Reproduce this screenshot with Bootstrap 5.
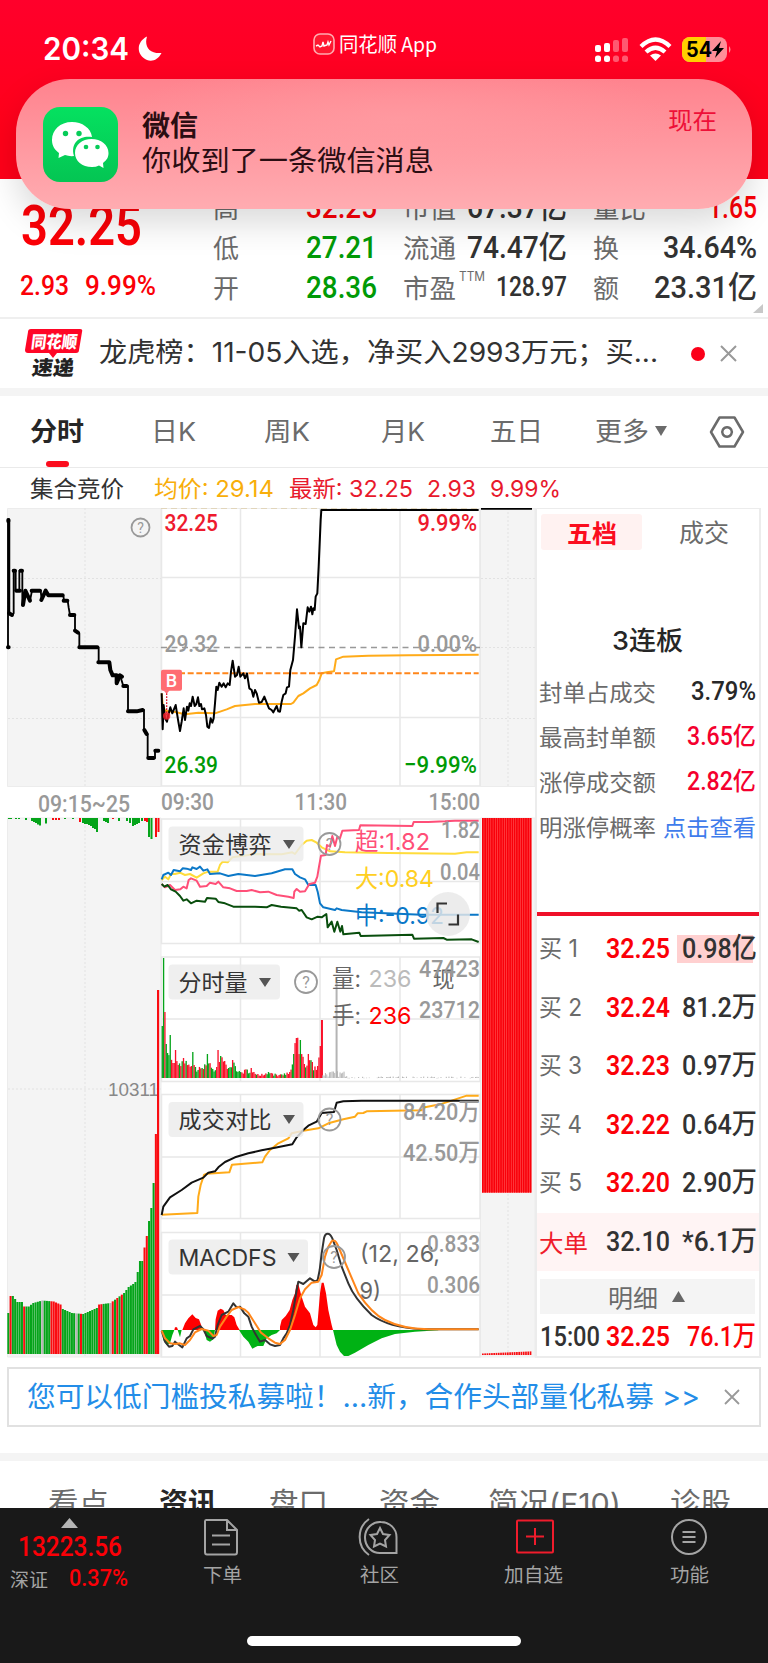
<!DOCTYPE html>
<html lang="zh-CN">
<head>
<meta charset="utf-8">
<meta name="viewport" content="width=device-width, initial-scale=1">
<title>同花顺</title>
<link rel="stylesheet" href="https://cdn.jsdelivr.net/npm/bootstrap@5.3.0/dist/css/bootstrap.min.css">
<style>
  body { font-family: "Noto Sans CJK SC", sans-serif; width: 768px; height: 1663px; overflow: hidden; background: #fff; color: #323232; line-height: 1; }
  svg { display: block; flex: none; }
  .num { font-family: Roboto, "Noto Sans CJK SC", sans-serif; font-weight: 500; }
  .ui { font-family: Inter, "Noto Sans CJK SC", sans-serif; }
  [data-w] { display: inline-block; white-space: nowrap; transform-origin: 0 50%; flex: none; text-align: left; }
  .up { color: #fb0007; } .down { color: #009a06; } .dim { color: #6b6b6b; }
  .app-top { height: 179px; background: linear-gradient(#ff002b, #ff0019 75%); color: #fff; padding: 0 36px 0 43px; }
  .status { height: 97px; }
  .clock { font-size: 31px; font-weight: 600; }
  .notice { left: 16px; top: 79px; width: 736px; height: 130px; border-radius: 54px; z-index: 5; padding: 0 35px 0 27px;
    background: radial-gradient(ellipse at 52% 30%, rgba(255,160,165,.55), transparent 50%), linear-gradient(#ff838e, #ffacb1); box-shadow: 0 14px 34px rgba(0,0,0,.15); color: #2b0d12; }
  .notice .title { font-size: 28px; font-weight: 600; line-height: 34px; }
  .notice .msg { font-size: 28px; line-height: 36px; }
  .notice .when { font-size: 24px; color: #ee1038; margin-top: 28px; }
  .quote { height: 138px; padding: 8px 10px 0 21px; }
  .quote .last-px { font-size: 55px; height: 75px; line-height: 79px; font-weight: 600; }
  .quote .chg { font-size: 28px; }
  .stats { width: 164px; margin-left: 26px; }
  .stats > div { height: 40px; font-size: 26px; }
  .stats .num { font-size: 31px; }
  .stats .small-num { font-size: 27px; }
  .rule { border-bottom: 2px solid #efefef; }
  .news { height: 69px; font-size: 27px; padding-left: 25px; }
  .band { height: 8px; background: #f4f4f4; }
  .tabs { height: 72px; font-size: 26px; border-bottom: 1px solid #eaeaea; }
  .tab-on { font-weight: 600; color: #262626; }
  .tab-on::after { content: ""; position: absolute; left: 16px; top: 42px; width: 23px; height: 6px; border-radius: 3px; background: #fb0d1e; }
  .legend-line { height: 40px; font-size: 23px; padding-left: 30px; padding-top: 2px; }
  .board { height: 850px; }
  .depth { width: 226px; height: 850px; border: 2px solid #ececec; border-top-width: 1px; }
  .depth .picks { height: 48px; padding: 5px 0 0 4px; font-size: 25px; }
  .pick { width: 101px; height: 36px; border-radius: 3px; background: #fff2f1; color: #fb0d1e; font-weight: 600; }
  .streak { font-size: 26px; font-weight: 500; height: 34px; margin: 67px 0 11px; color: #262626; padding-left: 75px; }
  .fact { height: 45.1px; font-size: 23px; padding: 0 3px 0 2px; }
  .fact .num { font-size: 25px; color: #282828; }
  .fact .hot { color: #f4002e; }
  .divide { height: 4px; background: #ef1029; margin-top: 62.300px; }
  .lvl { height: 58.6px; font-size: 24px; padding: 0 2px 0 2px; }
  .lvl .num { font-size: 28px; }
  .lvl .k { width: 67px; flex: none; }
  .lvl .px { margin-right: 12px; font-weight: 600; }
  .hl { background: linear-gradient(#ffd0d0,#ffd0d0) 0 50% / 76px 28px no-repeat; margin-left: -5px; padding-left: 5px; }
  .big { background: #fff4f4; }
  .detail { height: 35px; margin: 8px 4px 0 3px; background: #f4f4f4; font-size: 24px; }
  .promo { margin: 9px 7px 26px; height: 60px; border: 2px solid #e1e1e1; font-size: 28px; color: #238de8; padding-left: 18px; }
  .sections { height: 47px; overflow: hidden; font-size: 29px; padding-left: 48px; }
  .sections > span { margin-top: 28px; line-height: 30px; }
  .dock { height: 155px; background: #191919; color: #a4a4a4; font-size: 19px; }
  .home-bar { width: 274px; height: 10px; border-radius: 5px; background: #fff; left: 247px; bottom: 17px; }
</style>
</head>
<body>
<header class="app-top position-relative">
  <div class="status d-flex align-items-center">
    <span class="clock ui" data-w="86">20:34</span>
    <svg width="26" height="26" viewBox="0 0 26 26" style="margin-left:8px"><path fill="#fff" d="M10 .5C7 10 12 18 24.500 17C21 24 15 26 10 24C-1 19-1 6 10 .5Z"/></svg>
    <div class="d-flex align-items-center" style="margin-left:150px;margin-top:-10px">
      <svg width="22" height="22" viewBox="0 0 22 22"><rect x="1" y="1" width="20" height="20" rx="6" fill="#ff1730" stroke="#ffabb0" stroke-width="1.600"/><path d="M3 13l2-1 2 2 2-1 1-4 1 4 3-1 1-3 1 3 2-4" fill="none" stroke="#fff" stroke-width="1.400"/></svg>
      <span data-w="98" style="font-size:20px;margin-left:4px">同花顺 App</span>
    </div>
    <svg width="140" height="28" viewBox="0 0 140 28" style="margin-left:157px">
      <g fill="#fff"><rect x="1" y="10" width="6" height="7" rx="2"/><rect x="10" y="8" width="6" height="9" rx="2"/><rect x="1" y="20.500" width="6" height="6.500" rx="2.500"/><rect x="10" y="20.500" width="6" height="6.500" rx="2.500"/>
      <g opacity=".35"><rect x="19" y="5" width="6" height="12" rx="2"/><rect x="28" y="3" width="6" height="14" rx="2"/><rect x="19" y="20.500" width="6" height="6.500" rx="2.500"/><rect x="28" y="20.500" width="6" height="6.500" rx="2.500"/></g></g>
      <g fill="none" stroke="#fff" stroke-width="4.300"><path d="M47 11.500Q61.500-2.500 76 11.500"/><path d="M52 17Q61.500 8.500 71 17"/></g><path d="M56 20.500Q61.500 16.500 67 20.500L61.500 26Z" fill="#fff"/>
      <rect x="88" y="2" width="45" height="25" rx="8" fill="#ff8e98"/><path d="M96 2H112V27H96A8 8 0 0 1 88 19V10A8 8 0 0 1 96 2Z" fill="#ffd000"/><path d="M135 11q3 3.500 0 7z" fill="#ff8e98"/>
      <text x="92" y="22" font-family="Inter" font-weight="700" font-size="21" textLength="26" lengthAdjust="spacingAndGlyphs">54</text><path d="M127 6L118 16H123L121 23L130 13H125Z"/>
    </svg>
  </div>
  <div class="notice position-absolute d-flex align-items-center">
    <svg width="75" height="75" viewBox="0 0 75 75"><defs><linearGradient id="wx" x2="0" y2="1"><stop stop-color="#05e160"/><stop offset="1" stop-color="#04c553"/></linearGradient></defs><rect width="75" height="75" rx="17" fill="url(#wx)"/>
      <g fill="#fff"><path d="M29 15C17 15 9 23 9 33C9 39 12 43 16 46L15.500 51L22 48Q26 49.500 31 49C27 35 38 28 49 30C48 21 39 15 29 15Z"/><path d="M48.500 32C39 32 32 38 32 46C32 54 39 60 49 60Q53 60 56 58.500L60.500 61L60 56C64 53 65.500 50 65.500 46C65.500 38 58 32 48.500 32Z"/></g>
      <g fill="#06cc58"><circle cx="22.500" cy="26.500" r="2.700"/><circle cx="36" cy="26.500" r="2.700"/><circle cx="43" cy="40" r="2.300"/><circle cx="54.500" cy="40" r="2.300"/></g></svg>
    <div style="margin-left:24px;margin-top:-5px"><div class="title"><span data-w="56">微信</span></div><div class="msg"><span data-w="292">你收到了一条微信消息</span></div></div>
    <span class="when ms-auto align-self-start" data-w="49">现在</span>
  </div>
</header>

<section class="quote d-flex">
  <div style="width:166px">
    <div class="last-px num up"><span data-w="121">32.25</span></div>
    <div class="chg num up d-flex" style="margin-top:10px;gap:16px;margin-left:-1px"><span data-w="49">2.93</span><span data-w="71">9.99%</span></div>
  </div>
  <div class="stats">
    <div class="d-flex justify-content-between align-items-center"><span class="dim" data-w="26">高</span><span class="num up" data-w="71">32.25</span></div>
    <div class="d-flex justify-content-between align-items-center"><span class="dim" data-w="26">低</span><span class="num down" data-w="71">27.21</span></div>
    <div class="d-flex justify-content-between align-items-center"><span class="dim" data-w="26">开</span><span class="num down" data-w="71">28.36</span></div>
  </div>
  <div class="stats">
    <div class="d-flex justify-content-between align-items-center"><span class="dim" data-w="53">市值</span><span class="num" data-w="100">67.37亿</span></div>
    <div class="d-flex justify-content-between align-items-center"><span class="dim" data-w="53">流通</span><span class="num" data-w="100">74.47亿</span></div>
    <div class="d-flex justify-content-between align-items-center"><span class="dim" data-w="53">市盈</span><sup class="dim ui" style="font-size:12.500px;top:-10px;margin-left:3px" data-w="26">TTM</sup><span class="num small-num ms-auto" data-w="71">128.97</span></div>
  </div>
  <div class="stats">
    <div class="d-flex justify-content-between align-items-center"><span class="dim" data-w="53">量比</span><span class="num up" data-w="49">1.65</span></div>
    <div class="d-flex justify-content-between align-items-center"><span class="dim" data-w="26">换</span><span class="num" data-w="94">34.64%</span></div>
    <div class="d-flex justify-content-between align-items-center"><span class="dim" data-w="26">额</span><span class="num" data-w="103">23.31亿</span></div>
    <svg width="10" height="9" style="margin:-3px 0 0 160px"><path d="M10 0V9H0Z" fill="#c8c8c8"/></svg>
  </div>
</section>
<div class="rule"></div>
<section class="news d-flex align-items-center">
  <svg width="58" height="50" viewBox="0 0 58 50" style="margin-top:-2px"><path d="M6 1H55Q58 1 57 4L54 22Q54 25 51 25H32L28 30L24 25H3Q0 25 0 22L3 4Q3 1 6 1Z" fill="#ff0626"/><g transform="skewX(-7)"><text x="8" y="20" font-size="17" font-weight="900" fill="#fff" textLength="46" lengthAdjust="spacingAndGlyphs">同花顺</text><text x="12" y="47" font-size="20" font-weight="900" fill="#222" textLength="42" lengthAdjust="spacingAndGlyphs">速递</text></g></svg>
  <span class="ui" data-w="559" style="margin-left:16px;margin-top:-2px">龙虎榜：11-05入选，净买入2993万元；买...</span>
  <span class="rounded-circle" style="width:14px;height:14px;background:#fb0019;margin-left:33px"></span>
  <svg width="17" height="17" style="margin-left:15px"><path d="M1 1L16 16M16 1L1 16" stroke="#999" stroke-width="2"/></svg>
</section>
<div class="band"></div>
<nav class="tabs d-flex align-items-center dim ui">
  <span class="tab-on position-relative" style="margin-left:30px"><span data-w="54">分时</span></span>
  <span data-w="45" style="margin-left:67px">日K</span><span data-w="46" style="margin-left:68px">周K</span><span data-w="44" style="margin-left:71px">月K</span><span data-w="53" style="margin-left:65px">五日</span><span data-w="54" style="margin-left:52px">更多</span>
  <svg width="12" height="10" style="margin-left:6px;margin-top:-2px"><path d="M0 0H12L6 10Z" fill="#6b6b6b"/></svg>
  <svg width="36" height="32" style="margin-left:42px"><path d="M10.500 1.500H25.500L34 16L25.500 30.500H10.500L2 16Z M18 11.200a4.800 4.800 0 1 0 .1 0Z" fill="none" stroke="#6b6b6b" stroke-width="2.500" stroke-linejoin="round"/></svg>
</nav>
<div class="legend-line d-flex align-items-center ui">
  <span data-w="94">集合竞价</span><span data-w="120" style="color:#f8ae0b;margin-left:30px">均价: 29.14</span><span data-w="124" style="color:#e8192c;margin-left:15px">最新: 32.25</span><span data-w="49" style="color:#e8192c;margin-left:14px">2.93</span><span data-w="71" style="color:#e8192c;margin-left:14px">9.99%</span>
</div>

<main class="board d-flex">
  <svg id="charts" width="535" height="850" viewBox="0 508 535 850" font-family="Roboto, Noto Sans CJK SC, sans-serif">
    <!-- auction backgrounds -->
    <g fill="#f4f4f4" stroke="#ececec"><path d="M7.500 508.500H161V786.500H7.500ZM480.500 508.500H535V786.500H480.500ZM7.500 818H161V1357H7.500ZM480.500 818H535V1357H480.500Z"/></g>
    <g stroke="#e2e2e2" stroke-dasharray="2 2" fill="none"><path d="M85 508V786M85 818V1357M508 508V786M508 818V1357M8 578.500H161M8 647.500H161M8 718.500H161M481 578.500H535M481 647.500H535M481 718.500H535M8 1089H161"/></g>
    <!-- plot frames -->
    <g fill="#fff" stroke="#e8e8e8" stroke-width="1.500"><path d="M161.500 508H480V786H161.500ZM161.500 819H480V943.500H161.500ZM161.500 957H480V1081.500H161.500ZM161.500 1094.500H480V1218.500H161.500ZM161.500 1232.500H480V1357H161.500Z"/>
    <path d="M240.500 508V786M320 508V786M400 508V786M161 577.500H480M161 717.500H480M240.500 819V943M320 819V943M400 819V943M161 881.500H480M240.500 957V1081M320 957V1081M400 957V1081M161 1019H480M240.500 1094V1218M320 1094V1218M400 1094V1218M161 1157H480M240.500 1232V1357M320 1232V1357M400 1232V1357M161 1295H480"/></g>
    <path d="M161 508H480" stroke="#ddcdaa" stroke-width="1.500" stroke-dasharray="6 4"/>
    <path d="M161 647.500H480" stroke="#999" stroke-width="1.500" stroke-dasharray="6 4.500"/>
    <!-- opening auction -->
    <g transform="translate(0 500) scale(.33333)" fill="none" stroke="#000" stroke-linecap="round" stroke-linejoin="round">
      <path stroke-width="5.500" d="M24 442V58H28V340L36 345L41 340V212H47V272H58V212H67V315L76 272L90 302L96 272H122L125 300L137 272L145 286H190L192 302H203L206 323L210 345H225V392L238 400V442H296V487H330V510L338 526H350V550L360 526L370 558H384V634L420 632L432 630V690L443 702V774H465V752H475"/>
      <path stroke-width="12" d="M25 60V64M26 442H24M27 340L36 345M41 212H45M49 272H60M62 212H66M69 315L76 272L90 302M95 272H120M124 300L137 272L145 286H188M191 302H202M206 323M210 345H223M225 392L234 398M238 442H292M295 487H328L331 510L338 526H350L350 550L360 526L366 530M370 558H380M384 634H410L428 630M433 690L440 702M445 774H461M466 752H475"/>
    </g>
    <path d="M481 508.500H532" stroke="#000" stroke-width="2.500"/>
    <!-- intraday -->
    <g transform="translate(155 500) scale(.33333)" fill="none" stroke-linejoin="round">
      <path stroke="#ffab19" stroke-width="6" d="M20 580L23 615L30 632L60 636L90 643L130 638L180 640L215 628L240 618L300 612H408L415 608L430 588L445 580L465 565L485 555L493 540L500 520L520 516L537 514L543 478L565 470L640 467L760 466L971 464"/>
      <path stroke="#ff861b" stroke-width="6" stroke-dasharray="18 8" d="M20 520H971"/>
      <path stroke="#000" stroke-width="6" d="M20 580L23 688L26 615L30 655L36 665L40 645L46 622L52 640L62 615L66 640L70 665L75 693L80 665L86 625L90 660L96 620L100 632L104 610L108 618L113 590L119 618L124 612L129 592L133 618L138 612L141 628L148 625L153 645L157 680L162 684L167 655L172 668L176 655L180 610L184 560L188 570L193 548L200 560L206 550L212 562L218 550L224 555L228 515L233 482L240 530L246 525L251 500L256 530L265 520L270 535L276 520L283 565L290 570L295 590L300 570L305 580L312 608L320 606L328 590L335 608L342 625L350 630L355 637L365 618L370 634L375 635L380 605L385 585L392 580L396 562L402 560L406 510L414 480L420 410L426 328L432 385L435 380L439 442L445 370L452 372L458 322L463 335L468 320L472 343L475 325L479 330L482 290L487 280L491 200L494 130L497 60L499 30H971"/>
      <rect x="18" y="509" width="63" height="63" rx="6" fill="#ff6d72"/><path d="M25 571H44L35 581Z" fill="#ff6d72"/><path d="M35 580V645" stroke="#e61c2d" stroke-width="4" stroke-dasharray="5 4"/><circle cx="35" cy="648" r="11" fill="#f5222d" opacity=".85"/>
      <text x="32" y="560" fill="#fff" font-size="54" font-weight="500" stroke="none">B</text>
    </g>
    <!-- fund flows -->
    <g transform="translate(155 810) scale(.33333)" fill="none" stroke-width="6" stroke-linejoin="round">
      <path stroke="#ffdc3b" d="M20 210L30 200L40 208L48 192H60L75 188L90 195L105 192L125 203L145 190L160 185H188L195 165L203 155L218 157L232 142L260 138L300 132L380 133L412 127L420 132L440 105L455 92L470 90L485 98L500 112L525 124L570 127L700 129L900 131L935 127H971"/>
      <path stroke="#0b78c8" d="M20 208L25 195L40 188L48 195L56 180L75 184L83 175L95 176L108 180L112 172L125 177L135 170L145 182L157 178L165 192L195 190L220 198L250 192L300 198L350 190L390 178H412L420 192L435 202L450 208L460 225H482L488 245L495 280L505 292L540 300L545 295L560 300L620 307L800 314H971"/>
      <path stroke="#ff4f78" d="M20 222L30 232L45 225L60 240L76 238L85 230L95 235L101 210L108 205L125 212L135 230L155 228L165 218L182 222L190 215L205 232L225 235L245 243H275L290 240L315 247L340 245L365 255L400 260L416 264L418 245L425 237L435 245L450 244L463 222L480 218L487 200L492 170L498 137L512 135L516 105L525 110L532 78L540 108L547 80L555 85L562 62L612 60L616 46L772 48L776 36H820L870 34L900 32H971"/>
      <path stroke="#094e0d" d="M20 222L28 230L38 225L48 238L62 245L75 258L85 272L95 268L108 280L125 272L150 275L156 264L182 266L190 276L210 280L235 290H300L335 292L350 285L378 290L425 295L432 302L440 300L455 322L470 328L488 320L500 322L514 312L518 352L530 335L538 365L547 335L556 365L561 348L565 373L613 368L617 378L772 374L777 386L865 384L875 389L950 388L971 396"/>
    </g>
    <!-- cumulative volume and MACD -->
    <g transform="translate(155 1080) scale(.33333)" fill="none" stroke-width="6" stroke-linejoin="round">
      <path stroke="#ffab19" d="M20 404L127 399L130 350L137 315L147 285L155 281L223 277L231 254L322 247L330 230L345 210L370 190L400 175L410 160L445 152L490 145L520 130L565 118L600 110L608 100L625 99L635 94L800 91L810 82L855 73L890 62L935 47H971"/>
      <path stroke="#111" d="M20 405L25 380L45 352L80 330L110 308L145 293L160 278L180 274L190 262L210 246L240 232L280 220L320 211L360 203L412 193L425 172L445 150L460 137L485 125L500 99L537 96L545 68L565 64L620 62H971"/>
      <g stroke="none"><path fill="#00b214" d="M20 750L25 780L35 795L45 790L52 765L58 750ZM68 750L75 772L80 750ZM147 750L155 780L165 785L175 778L180 750ZM252 750L265 770L280 785L292 806L308 798L325 798L335 775L350 765L365 760L375 750ZM534 750L545 795L555 815L567 828L580 828L600 818L640 795L680 775L720 762L780 755L850 751V750Z"/>
      <path fill="red" d="M58 750L60 742H66L69 750ZM82 750L90 730L100 715L112 703L122 714L132 718L142 745L147 750ZM180 750L182 718L188 692L197 686L205 690L212 705H230L238 712L245 735L254 750ZM375 750V740L380 720L392 708L404 690L412 660L420 640L424 615L430 612L440 650L450 680L465 700L475 735L482 742L487 735L490 700L495 640L500 608H506L513 640L520 690L530 735L534 750Z"/></g>
      <path stroke="#333" d="M20 752L30 785L42 800L52 798L60 785L75 797L82 802L95 775L105 768L115 748L135 738L145 748L155 768L172 776L180 770L188 735L200 705L220 695L235 670L245 682L255 680L268 700L280 710L290 740L300 760L315 785L330 780L345 793L360 798L375 795L385 775L395 760L405 735L415 690L425 630L430 605L445 612L465 595L480 605L488 600L494 570L500 520L507 475Q510 461 518 461T532 475L545 510L560 560L580 610Q598 655 650 705Q700 742 800 748H971"/>
      <path stroke="#ff861b" d="M20 752L30 775L45 790L60 792L75 790L90 795L105 780L120 757L140 747L160 752L175 768L185 765L195 740L215 710L230 690L250 681L268 688L280 698L300 730L318 758L340 775L360 788L375 792L390 780L405 750L420 705L435 655L450 628L470 608L490 605L500 585L510 530L520 500L530 484Q540 476 548 495L580 570L610 640Q650 700 690 720Q740 746 820 748H971"/>
    </g>
    <g id="bars"></g>
    <!-- chips -->
    <g fill="#ececec" fill-opacity=".82"><rect x="168.500" y="826.500" width="135" height="35" rx="4"/><rect x="168.500" y="964.500" width="111.500" height="35" rx="4"/><rect x="168.500" y="1102" width="135" height="35" rx="4"/><rect x="168.500" y="1239.500" width="139.500" height="35" rx="4"/></g>
    <g fill="#333" font-family="Inter, Noto Sans CJK SC" font-size="23"><text x="178.500" y="853" textLength="93">资金博弈</text><text x="178.500" y="990.500" textLength="69">分时量</text><text x="178.500" y="1128" textLength="93">成交对比</text><text x="178.500" y="1266" textLength="98" lengthAdjust="spacingAndGlyphs">MACDFS</text></g>
    <path fill="#555" d="M283 840H295L289 849ZM259 978H271L265 987ZM283 1115H295L289 1124ZM287.500 1253H299.500L293.500 1262Z"/>
    <g fill="none" stroke="#999" stroke-width="1.800"><circle cx="140.500" cy="527.500" r="9"/><circle cx="329.500" cy="844" r="11"/><circle cx="306" cy="982" r="11"/><circle cx="329.500" cy="1119.500" r="11"/><circle cx="334" cy="1257" r="11"/></g>
    <g fill="#999" font-size="16" text-anchor="middle"><text x="140.500" y="533" font-size="14">?</text><text x="329.500" y="850">?</text><text x="306" y="988">?</text><text x="329.500" y="1125">?</text><text x="334" y="1263">?</text></g>
    <!-- indicator readings -->
    <g font-family="Inter, Noto Sans CJK SC" font-size="23.500">
      <text x="355" y="849.500" fill="#ff4f78" textLength="75" lengthAdjust="spacingAndGlyphs">超:1.82</text><text x="355" y="887" fill="#ffcf22" textLength="79" lengthAdjust="spacingAndGlyphs">大:0.84</text><text x="355" y="924" fill="#0b78c8" textLength="89" lengthAdjust="spacingAndGlyphs">中:-0.92</text>
      <g fill="#666"><text x="332" y="986.500" textLength="29" lengthAdjust="spacingAndGlyphs">量:</text><text x="332" y="1024" textLength="29" lengthAdjust="spacingAndGlyphs">手:</text><text x="432.500" y="987" font-size="22">现</text><text x="360" y="1262" textLength="80" lengthAdjust="spacingAndGlyphs">(12, 26,</text><text x="359.500" y="1299" textLength="21.500" lengthAdjust="spacingAndGlyphs">9)</text></g>
      <text x="368.500" y="987" fill="#bbb" textLength="43" lengthAdjust="spacingAndGlyphs">236</text><text x="368.500" y="1024" fill="red" textLength="43" lengthAdjust="spacingAndGlyphs">236</text>
    </g>
    <circle cx="448" cy="914" r="22" fill="#e8e8e8" fill-opacity=".82"/><path d="M437.500 913V903.500H447M458 914.500V924.500H448.500" fill="none" stroke="#333" stroke-width="2.200"/>
    <!-- axis labels -->
    <g font-size="24.500" font-weight="500">
      <g fill="#ee1a2e"><text x="164.500" y="531" textLength="53.500" lengthAdjust="spacingAndGlyphs">32.25</text><text x="417.500" y="531" textLength="59.500" lengthAdjust="spacingAndGlyphs">9.99%</text></g>
      <g fill="#009a06"><text x="164.500" y="773" textLength="53.500" lengthAdjust="spacingAndGlyphs">26.39</text><text x="404" y="773" textLength="73" lengthAdjust="spacingAndGlyphs">−9.99%</text></g>
      <g fill="#999"><text x="164.500" y="652" textLength="53.500" lengthAdjust="spacingAndGlyphs">29.32</text><text x="417.500" y="652" textLength="59.500" lengthAdjust="spacingAndGlyphs">0.00%</text>
      <text x="38" y="812" textLength="92" lengthAdjust="spacingAndGlyphs">09:15~25</text><text x="161" y="810" textLength="53" lengthAdjust="spacingAndGlyphs">09:30</text><text x="294.500" y="810" textLength="52.500" lengthAdjust="spacingAndGlyphs">11:30</text><text x="428.500" y="810" textLength="51.500" lengthAdjust="spacingAndGlyphs">15:00</text>
      <text x="441" y="838" textLength="39" lengthAdjust="spacingAndGlyphs">1.82</text><text x="440" y="880" textLength="40" lengthAdjust="spacingAndGlyphs">0.04</text><text x="419" y="976.500" textLength="61" lengthAdjust="spacingAndGlyphs">47423</text><text x="419" y="1017.500" textLength="61" lengthAdjust="spacingAndGlyphs">23712</text>
      <text x="403" y="1120" textLength="77" lengthAdjust="spacingAndGlyphs">84.20万</text><text x="403" y="1161" textLength="77" lengthAdjust="spacingAndGlyphs">42.50万</text><text x="427" y="1251.500" textLength="53" lengthAdjust="spacingAndGlyphs">0.833</text><text x="427" y="1293" textLength="53" lengthAdjust="spacingAndGlyphs">0.306</text></g>
    </g>
    <text x="108" y="1096" font-family="Liberation Sans" font-size="19" fill="#888" textLength="51" lengthAdjust="spacingAndGlyphs">10311</text>
    <rect x="157" y="990" width="2" height="364" fill="#fa0b10"/>
  </svg>

  <aside class="depth">
    <div class="picks d-flex"><div class="pick d-flex align-items-center justify-content-center"><span data-w="50">五档</span></div><span class="dim" data-w="50" style="margin:5px 0 0 37px">成交</span></div>
    <div class="streak ui d-flex align-items-center"><span data-w="71">3连板</span></div>
    <div class="fact d-flex justify-content-between align-items-center"><span class="dim" data-w="117">封单占成交</span><span class="num" data-w="65">3.79%</span></div>
    <div class="fact d-flex justify-content-between align-items-center"><span class="dim" data-w="117">最高封单额</span><span class="num hot" data-w="69">3.65亿</span></div>
    <div class="fact d-flex justify-content-between align-items-center"><span class="dim" data-w="117">涨停成交额</span><span class="num hot" data-w="69">2.82亿</span></div>
    <div class="fact d-flex justify-content-between align-items-center"><span class="dim" data-w="117">明涨停概率</span><span data-w="93" style="color:#3f7cec">点击查看</span></div>
    <div class="divide"></div>
    <div style="padding-top:4px">
    <div class="lvl d-flex align-items-center"><span class="k dim ui"><span data-w="39">买 1</span></span><span class="px num up" data-w="64">32.25</span><span class="num hl"><span data-w="75">0.98亿</span></span></div>
    <div class="lvl d-flex align-items-center"><span class="k dim ui"><span data-w="43">买 2</span></span><span class="px num up" data-w="64">32.24</span><span class="num" data-w="75">81.2万</span></div>
    <div class="lvl d-flex align-items-center"><span class="k dim ui"><span data-w="43">买 3</span></span><span class="px num up" data-w="64">32.23</span><span class="num" data-w="75">0.97万</span></div>
    <div class="lvl d-flex align-items-center"><span class="k dim ui"><span data-w="43">买 4</span></span><span class="px num up" data-w="64">32.22</span><span class="num" data-w="75">0.64万</span></div>
    <div class="lvl d-flex align-items-center"><span class="k dim ui"><span data-w="43">买 5</span></span><span class="px num up" data-w="64">32.20</span><span class="num" data-w="75">2.90万</span></div>
    </div>
    <div class="lvl big d-flex align-items-center"><span class="k" style="color:#ef1c2c"><span data-w="49">大单</span></span><span class="px num" data-w="64" style="font-weight:500">32.10</span><span class="num" data-w="75">*6.1万</span></div>
    <div class="detail d-flex align-items-center justify-content-center dim" style="gap:14px;padding-right:2px"><span data-w="50">明细</span><svg width="13" height="11"><path d="M6.500 0L13 11H0Z" fill="#666"/></svg></div>
    <div class="d-flex align-items-center num up" style="height:44px;padding:2px 3px 0 3px;font-size:28px"><span data-w="60" style="color:#323232">15:00</span><span data-w="64" style="margin-left:6px;font-weight:600">32.25</span><span class="ms-auto" data-w="69">76.1万</span></div>
  </aside>
</main>

<div class="promo d-flex align-items-center ui"><span data-w="673">您可以低门槛投私募啦！...新，合作头部量化私募 &gt;&gt;</span>
  <svg width="16" height="16" style="margin-left:24px"><path d="M1 1L15 15M15 1L1 15" stroke="#999" stroke-width="1.800"/></svg></div>
<div class="band"></div>
<div class="sections dim d-flex ui">
  <span data-w="61">看点</span><span data-w="58" style="margin-left:50px;font-weight:600;color:#262626">资讯</span><span data-w="59" style="margin-left:52px">盘口</span><span data-w="61" style="margin-left:51px">资金</span><span data-w="133" style="margin-left:48px">简况(F10)</span><span data-w="61" style="margin-left:49px">诊股</span>
</div>
<footer class="dock position-relative d-flex">
  <div style="width:203px;padding:10px 0 0 10px">
    <svg width="17" height="10" style="margin-left:51px"><path d="M8.500 0L17 10H0Z" fill="#b5b5b5"/></svg>
    <div class="num up" style="font-size:28px;padding-left:8px;margin-top:5px"><span data-w="104">13223.56</span></div>
    <div class="d-flex align-items-center" style="margin-top:5px;gap:21px"><span data-w="38">深证</span><span class="num up" data-w="59" style="font-size:24px">0.37%</span></div>
  </div>
  <div class="flex-shrink-0" style="width:154px;padding-top:10px"><svg width="38" height="38" viewBox="0 0 38 38" fill="none" stroke="#a4a4a4" stroke-width="2"><path d="M3 2H24L34 12V34Q34 36.500 32 36.500H4Q2 36.500 2 34V3.500Q2 2 3 2ZM24 2V12H34M9 17.500H27M9 26.500H27"/></svg><span data-w="39" style="margin-top:8px">下单</span></div>
  <div class="flex-shrink-0" style="width:147px;padding-top:10px"><svg width="42" height="38" viewBox="0 0 42 38" fill="none" stroke="#a4a4a4" stroke-width="2"><path d="M24 4A15 15.500 0 0 0 8 19A15 15.500 0 0 0 24 35H39.500V19A15.500 15 0 0 0 24 4ZM12 1A22 22 0 0 0 12 37"/><path d="M23 10L26 16L32.500 17L28 22L29 28.500L23 25.500L17 28.500L18 22L13.500 17L20 16Z"/></svg><span data-w="39" style="margin:8px 0 0 3px">社区</span></div>
  <div class="flex-shrink-0" style="width:166px;padding-top:10px"><svg width="38" height="38" viewBox="0 0 38 38" style="margin-left:12px" fill="none" stroke="#f01c2c" stroke-width="2"><rect x="1" y="2.500" width="36" height="32" rx="1"/><path d="M19 10V27M10 18.500H28"/></svg><span data-w="59" style="margin-top:8px">加自选</span></div>
  <div class="flex-shrink-0" style="padding-top:10px"><svg width="38" height="38" viewBox="0 0 38 38" fill="none" stroke="#a4a4a4" stroke-width="2"><circle cx="19" cy="19" r="17"/><path d="M12.500 14H25.500M12.500 19H25.500M12.500 24H25.500"/></svg><span data-w="39" style="margin-top:8px">功能</span></div>
  <div class="home-bar position-absolute"></div>
</footer>
<script src="https://cdn.jsdelivr.net/npm/bootstrap@5.3.0/dist/js/bootstrap.bundle.min.js"></script>
<script>
  // Condense each label to its column width.
  document.querySelectorAll('[data-w]').forEach(el => {
    const want = +el.dataset.w, natural = el.getBoundingClientRect().width;
    el.style.width = want + 'px';
    el.style.transform = `scaleX(${want / natural})`;
  });

  const RED = '#fa0b10', GREEN = '#05a41a', GREY = '#b4b4b4';
  let out = '';
  const bar = (x, top, w, bottom, c) => { out += `<rect x="${x.toFixed(2)}" y="${top.toFixed(2)}" width="${w}" height="${Math.max(.5, bottom - top).toFixed(2)}" fill="${c}"/>`; };
  const lerp = (pts, x) => { for (let i = 1; i < pts.length; i++) if (x <= pts[i][0]) { const [a, b] = pts[i - 1], [c, d] = pts[i]; return b + (d - b) * (x - a) / (c - a); } return pts[pts.length - 1][1]; };

  // Unmatched auction volume by step.
  const env = [[0,1313],[1,1296],[2,1296],[4,1302],[6,1302],[7,1306.500],[9,1306.500],[11,1303],[15,1300.500],[20,1301.500],[23,1304.500],[24,1309],[28,1313],[33,1314],[36,1311],[39,1308],[40,1304.500],[45,1303],[48,1298],[51,1293],[53,1287],[55,1284],[56,1282],[57,1272],[58,1261],[59,1261],[60,1247.500],[61,1236],[62,1221],[63,1208],[64,1183],[65,1134],[66,990]];
  const red = new Set([1,7,19,20,21,22,23,32,40,41,46,48,50,60,61,65,66]), grey = new Set([15,30,45]);
  for (let i = 0; i <= 66; i++) bar(7.300 + i * 2.270, lerp(env, i), 2.050, 1354, red.has(i) ? RED : grey.has(i) ? GREY : GREEN);
  // Hanging order-balance bars.
  [[8,1],[10,1],[15,1],[18,1],[25,2],[31,3],[33,4],[35,5],[37,6.500],[39,7.500],[45,5.500],[52,2,1],[55,2,1],[58,2,1],[64,1],[72,1],[79,4,1],[82,5],[84,6],[86,6],[88,7],[90,8],[92,10],[94,11],[96,14],[103,3],[105,4],[107,5],[112,1,1],[118,3],[126,3],[129,5],[132,8],[134,7],[136,6],[138,5],[141,3],[144,3,1],[146,4,1],[148,19],[150.500,21],[155,19,1],[157.500,14,1]].forEach(([x, h, r]) => bar(x, 818, 2, 818 + h, r ? RED : GREEN));
  // Closing auction.
  bar(482, 818, 49.500, 1192.500, '#ff5a5a');
  for (let i = 0; i < 22; i++) { bar(482 + i * 2.270, 818, 1.700, 1192.700, '#f9000a'); bar(482 + i * 2.270, 1353.500 - i * .1, 1.700, 1355, RED); }
  // Minute volume.
  const vol = [[0,52],[1,120],[2,66],[3,34],[4,25],[6,43],[8,15],[10,28],[12,13],[16,20],[22,12],[23,26],[25,11],[30,10],[34,24],[38,9],[41,11],[42,28],[44,22],[47,17],[50,10],[53,18],[57,6],[67,10],[72,4],[80,6],[88,3],[96,6],[99,24],[101,40],[104,38],[107,14],[110,24],[113,16],[117,12],[119,32],[120,58]];
  let seed = 7; const rnd = () => (seed = seed * 16807 % 2147483647) / 2147483647;
  for (let i = 0; i <= 120; i++) { const peak = vol.some(p => p[0] === i), h = lerp(vol, i) * (peak ? 1 : .5 + rnd() * .6); bar(161.600 + i * 1.328, 1078 - h, i === 120 ? 2 : 1.330, 1078, i === 1 || (i > 2 && i < 7) ? GREEN : i > 114 ? '#fa1029' : rnd() > .48 ? '#fa1029' : GREEN); }
  for (let i = 121; i < 240; i++) { const h = i === 131 ? 95 : i < 140 ? 1 + rnd() * 6 : rnd() * 1.500; if (i < 142 || rnd() > .5) bar(161.600 + i * 1.328, 1078 - h, i === 131 ? 2 : 1, 1078, GREY); }
  document.getElementById('bars').innerHTML = out;
</script>
</body>
</html>
